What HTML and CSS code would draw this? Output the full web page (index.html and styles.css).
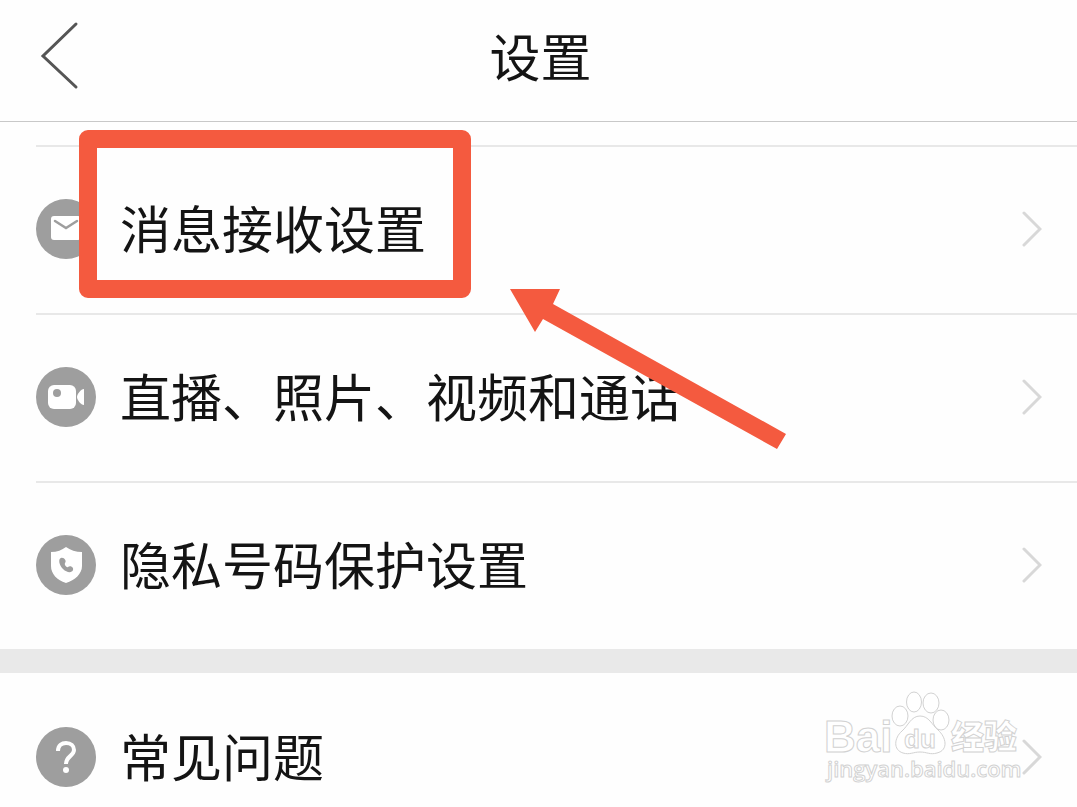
FILE: index.html
```html
<!DOCTYPE html>
<html lang="zh-CN">
<head>
    <meta charset="UTF-8">
    <meta name="viewport" content="width=device-width, initial-scale=1.0">
    <title>设置</title>
    <link rel="stylesheet" href="styles.css">
</head>
<body>
    <header class="header">
        <button class="back" type="button" aria-label="返回">
            <svg width="40" height="70" viewBox="0 0 40 70"><path d="M36 4L3 36L36 67"/></svg>
        </button>
        <h1>设置</h1>
    </header>

    <main>
        <ul class="list list-top">
            <li>
                <a class="row" href="#message">
                    <svg class="icon" viewBox="0 0 60 60">
                        <circle cx="30" cy="30" r="30" fill="#9e9e9e"/>
                        <rect x="15" y="17" width="30" height="24" rx="3" fill="#fff"/>
                        <path d="M19 22L30 29L41 22" fill="none" stroke="#9e9e9e" stroke-width="2.5" stroke-linecap="round"/>
                    </svg>
                    <span class="label">消息接收设置</span>
                    <svg class="arrow" viewBox="0 0 20 36"><path d="M2 2L18 18L2 34"/></svg>
                </a>
                <div class="mark-box"></div>
            </li>
            <li>
                <a class="row" href="#media">
                    <svg class="icon" viewBox="0 0 60 60">
                        <circle cx="30" cy="30" r="30" fill="#9e9e9e"/>
                        <rect x="12" y="18" width="28" height="24" rx="6" fill="#fff"/>
                        <circle cx="21" cy="26" r="4" fill="#9e9e9e"/>
                        <path d="M48 22V38C45 38 41 33 41 30C41 27 45 22 48 22Z" fill="#fff"/>
                    </svg>
                    <span class="label">直播、照片、视频和通话</span>
                    <svg class="arrow" viewBox="0 0 20 36"><path d="M2 2L18 18L2 34"/></svg>
                </a>
            </li>
            <li>
                <a class="row" href="#privacy">
                    <svg class="icon" viewBox="0 0 60 60">
                        <circle cx="30" cy="30" r="30" fill="#9e9e9e"/>
                        <path d="M30 12C34 15 40 17 46 17V31C46 39 39 45 30 48C21 45 15 39 15 31V17C21 17 26 15 30 12Z" fill="#fff"/>
                        <path d="M25 23C22 24 23 30 27 34C31 38 36 38 37 35C38 32 34 30 32 32C31 33 28 30 29 28C31 26 28 22 25 23Z" fill="#9e9e9e"/>
                    </svg>
                    <span class="label">隐私号码保护设置</span>
                    <svg class="arrow" viewBox="0 0 20 36"><path d="M2 2L18 18L2 34"/></svg>
                </a>
            </li>
        </ul>

        <ul class="list list-help">
            <li>
                <a class="row" href="#faq">
                    <svg class="icon" viewBox="0 0 60 60">
                        <circle cx="30" cy="30" r="30" fill="#9e9e9e"/>
                        <path d="M22 24C22 18 26 16 30 16C35 16 38 19 38 23C38 29 30 29 30 37" fill="none" stroke="#fff" stroke-width="4"/>
                        <circle cx="30" cy="43" r="3" fill="#fff"/>
                    </svg>
                    <span class="label">常见问题</span>
                    <svg class="arrow" viewBox="0 0 20 36"><path d="M2 2L18 18L2 34"/></svg>
                </a>
            </li>
        </ul>
    </main>

    <!-- Pointer to the highlighted setting -->
    <svg class="mark-arrow" width="280" height="164" viewBox="0 0 280 164">
        <path d="M2 1H52L45 16L278 146L269 161L35 31L27 44Z"/>
    </svg>

    <svg class="watermark" width="210" height="100" viewBox="0 0 210 100">
        <g class="paw">
            <ellipse cx="80" cy="26" rx="8" ry="10"/>
            <ellipse cx="94" cy="12" rx="7.5" ry="10"/>
            <ellipse cx="111" cy="13" rx="8" ry="10"/>
            <ellipse cx="121" cy="30" rx="8" ry="10"/>
            <path d="M100 26C109 26 112 35 118 40C126 47 129 60 117 63C110 65 107 62 100 62C93 62 90 65 83 63C73 60 74 48 82 41C88 36 91 26 100 26Z"/>
        </g>
        <text class="wm-logo" x="4" y="62">Bai</text>
        <text class="wm-du" x="84" y="58">du</text>
        <text class="wm-cn" x="131" y="59">经验</text>
        <text class="wm-url" x="7" y="87">jingyan.baidu.com</text>
    </svg>
</body>
</html>
```
FILE: styles.css
```css
* {
    box-sizing: border-box;
}
body {
    position: relative;
    margin: 0;
    background-color: #fefefe;
    color: #141414;
    font-family: "Noto Sans CJK SC", sans-serif;
}
.header {
    display: grid;
    grid-template-columns: 80px 1fr 76px;
    align-items: center;
    padding: 12px 0 23px;
    border-bottom: 1px solid #c8c8c8;
}
.header h1 {
    margin: 0;
    font-size: 51px;
    font-weight: 400;
    line-height: 86px;
    text-align: center;
}
.back {
    display: flex;
    justify-content: flex-end;
    padding: 0;
    border: none;
    background: none;
    cursor: pointer;
}
.back path {
    fill: none;
    stroke: #555;
    stroke-width: 3;
    stroke-linecap: round;
}
.list {
    margin: 0;
    padding: 0;
    list-style: none;
}
.list-top {
    padding-top: 23px;
}
.list li {
    position: relative;
}
.row {
    display: flex;
    align-items: center;
    gap: 24px;
    margin-left: 36px;
    padding: 52px 35px 54px 0;
    border-top: 2px solid #e8e8e8;
    color: inherit;
    text-decoration: none;
}
.icon {
    flex: none;
    width: 60px;
    height: 60px;
}
.label {
    flex: 1;
    padding-bottom: 4px;
    font-size: 51px;
    line-height: 56px;
}
.arrow {
    flex: none;
    width: 20px;
    height: 36px;
    fill: none;
    stroke: #d8d8d8;
    stroke-width: 3;
    stroke-linecap: round;
}
.list-help {
    border-top: 24px solid #e9e9e9;
}
.list-help .row {
    padding: 54px 35px 20px 0;
    border-top: none;
}
.mark-box {
    position: absolute;
    top: -15px;
    left: 79px;
    width: 392px;
    height: 168px;
    border: 18px solid #f45a3f;
    border-radius: 9px;
}
.mark-arrow {
    position: absolute;
    top: 288px;
    left: 508px;
    fill: #f45a3f;
}
.watermark {
    position: absolute;
    top: 690px;
    left: 820px;
    fill: #fff;
    stroke: #d2d2d2;
    stroke-width: 1;
}
.wm-logo {
    font: 700 44px "Liberation Sans", sans-serif;
}
.wm-du {
    font: 700 26px "Liberation Sans", sans-serif;
}
.wm-cn {
    font: 900 33px "Noto Sans CJK SC", sans-serif;
}
.wm-url {
    font: 600 22px "Open Sans", sans-serif;
}
```
